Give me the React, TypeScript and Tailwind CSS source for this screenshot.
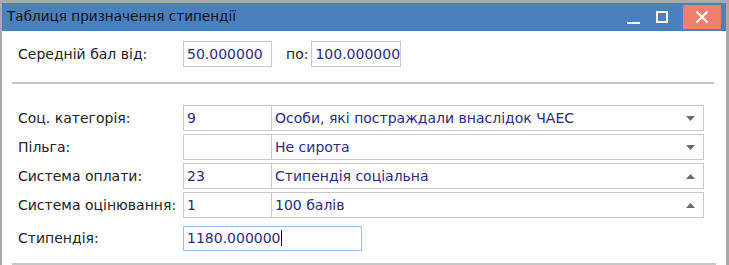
// Вікно "Таблиця призначення стипендії"
const font = { fontFamily: '"DejaVu Sans", Verdana, sans-serif' }

function Arrow({ up }: { up?: boolean }) {
	return (
		<svg width="9" height="5" viewBox="0 0 9 5" className="shrink-0">
			{up ? <polygon points="0,5 9,5 4.5,0" fill="#6b6b6b" /> : <polygon points="0,0 9,0 4.5,5" fill="#6b6b6b" />}
		</svg>
	)
}

function Field({ className, children }: { className?: string; children?: React.ReactNode }) {
	return (
		<div className={`h-[26px] border border-[#c9c9c9] bg-white flex items-center pl-[3px] overflow-hidden whitespace-nowrap text-[#2a2a86] ${className ?? ''}`}>
			{children}
		</div>
	)
}

function SelectRow({ label, code, name, up }: { label: string; code: string; name: string; up?: boolean }) {
	return (
		<div className="flex items-center h-[26px]">
			<div className="w-[165px] text-[#222]">{label}</div>
			<Field className="w-[89px]">{code}</Field>
			<Field className="w-[433px] -ml-px justify-between pr-[8px]">
				<span>{name}</span>
				<Arrow up={up} />
			</Field>
		</div>
	)
}

export default function App() {
	return (
		<div className="w-[729px] h-[265px] overflow-hidden bg-[#a9a9a9] pt-[3px] pl-[2px] pr-[3px] text-[14px] leading-none" style={font}>
			<div className="bg-white h-full flex flex-col">
				{/* Заголовок */}
				<div className="h-[28px] bg-[#4a80be] flex items-center justify-between pl-[5px] pr-[5px] shrink-0">
					<span className="text-[#111] text-[13.6px]">Таблиця призначення стипендії</span>
					<div className="flex items-center h-full">
						<div className="w-[13px] h-[2px] bg-white mt-[12px] mr-[16px]" />
						<div className="w-[12px] h-[12px] border-2 border-white mr-[15px]" />
						<div className="w-[38px] h-[24px] bg-[#f0806e] flex items-center justify-center">
							<svg width="14" height="14" viewBox="0 0 14 14">
								<path d="M1.5 1.5 L12.5 12.5 M12.5 1.5 L1.5 12.5" stroke="white" strokeWidth="2" />
							</svg>
						</div>
					</div>
				</div>

				<div className="pl-[16px] pt-[10px]">
					{/* Середній бал */}
					<div className="flex items-center h-[26px]">
						<div className="w-[165px] text-[#222]">Середній бал від:</div>
						<Field className="w-[89px]">50.000000</Field>
						<span className="ml-[14px] mr-[3px] text-[#222]">по:</span>
						<Field className="w-[90px]">100.000000</Field>
					</div>

					<div className="mt-[15px] mr-[12px] -ml-[6px] h-[2px] bg-[#c8c8c8]" />

					<div className="mt-[21px] flex flex-col gap-[3px]">
						<SelectRow label="Соц. категорія:" code="9" name="Особи, які постраждали внаслідок ЧАЕС" />
						<SelectRow label="Пільга:" code="" name="Не сирота" />
						<SelectRow label="Система оплати:" code="23" name="Стипендія соціальна" up />
						<SelectRow label="Система оцінювання:" code="1" name="100 балів" up />
						<div className="flex items-center h-[26px] mt-[4px]">
							<div className="w-[165px] text-[#222]">Стипендія:</div>
							<div className="w-[179px] h-[25px] border border-[#9cc1e8] flex items-center px-[3px] text-[#2a2a86]">
								1180.000000
								<span className="w-px h-[16px] bg-black" />
							</div>
						</div>
					</div>

					<div className="mt-[12px] -ml-[6px] mr-[10px] h-[20px] border-2 border-[#c8c8c8]" />
				</div>
			</div>
		</div>
	)
}
